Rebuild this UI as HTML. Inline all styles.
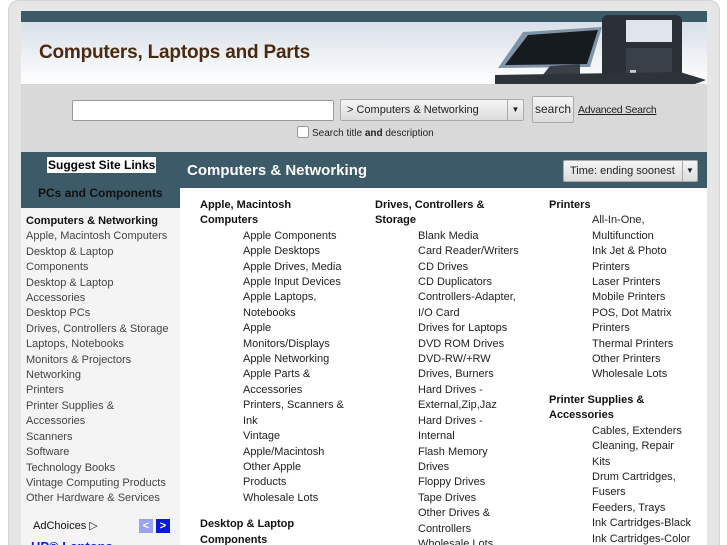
<!DOCTYPE html>
<html style="width:727px;height:545px;overflow:hidden"><head><meta charset="utf-8"><style>
*{margin:0;padding:0;box-sizing:border-box}
body{width:727px;height:545px;overflow:hidden;background:#fff;font-family:"Liberation Sans",sans-serif;position:relative}
.abs{position:absolute}
.frame{left:8px;top:0;width:712px;height:545px;background:#e6e6e6;border:1px solid #d4d4d4;border-bottom:none;border-radius:10px 10px 0 0}
.bar{left:21px;top:11px;width:686px;height:11px;background:#3c5a68}
.hdr{left:21px;top:22px;width:686px;height:62px;background:linear-gradient(180deg,#d8dfe8 0%,#eef1f5 55%,#fff 100%)}
.title{left:39px;top:42px;font-size:19px;font-weight:bold;color:#4a2a10;letter-spacing:-0.2px}
.search{left:21px;top:84px;width:686px;height:68px;background:#d9d9d9}
.side{left:21px;top:152px;width:159px;height:393px;background:#f4f4f4}
.sideh{left:21px;top:152px;width:159px;height:56px;background:#3c5a68}
.main{left:180px;top:152px;width:527px;height:393px;background:#fff}
.mainh{left:180px;top:152px;width:527px;height:36px;background:#3c5a68}
.sl{font-size:11px;line-height:15.4px;color:#444}
.col{font-size:11px;line-height:15.4px;color:#222}
.col b{display:block;color:#111}
.col .i{padding-left:43px}
</style></head><body>
<div class="abs frame"></div>
<div class="abs bar"></div>
<div class="abs hdr"></div>
<div class="abs title">Computers, Laptops and Parts</div>
<svg class="abs" style="left:480px;top:12px" width="235" height="72">
<rect x="122" y="3" width="80" height="69" rx="6" fill="#2a3036"/>
<rect x="146" y="8" width="46" height="22" fill="#dfe5ea"/>
<rect x="146" y="36" width="46" height="32" fill="#394049"/>
<rect x="150" y="58" width="6" height="4" fill="#ccc"/>
<polygon points="43,20 122,15 110,55 18,56" fill="#8193a6"/>
<polygon points="48,23 118,18 107,52 25,53" fill="#161b20"/>
<polygon points="70,54 100,52 100,64 62,64" fill="#3a4046"/>
<polygon points="15,63 200,60 226,68 215,72 15,72" fill="#2d3338"/>
</svg>
<div class="abs search"></div>
<div class="abs" style="left:72px;top:100px;width:262px;height:21px;background:#fff;border:1px solid #999;border-radius:2px"></div>
<div class="abs" style="left:340px;top:99px;width:184px;height:22px;background:linear-gradient(#f5f5f5,#dcdcdc);border:1px solid #aaa;border-radius:2px;font-size:11px;line-height:20px;padding-left:6px;color:#222">&gt; Computers &amp; Networking<span style="position:absolute;right:0;top:0;width:16px;height:20px;border-left:1px solid #aaa;text-align:center;font-size:8px">▼</span></div>
<div class="abs" style="left:532px;top:96px;width:42px;height:27px;background:linear-gradient(#f5f5f5,#dcdcdc);border:1px solid #aaa;border-radius:2px;font-size:12px;line-height:25px;text-align:center;color:#222">search</div>
<div class="abs" style="left:578px;top:104px;font-size:10.5px;color:#222;text-decoration:underline;letter-spacing:-0.3px">Advanced Search</div>
<div class="abs" style="left:297px;top:126px;width:12px;height:12px;background:#fff;border:1px solid #999;border-radius:2px"></div>
<div class="abs" style="left:312px;top:128px;font-size:10px;color:#222">Search title <b>and</b> description</div>
<div class="abs side"></div>
<div class="abs sideh"></div>
<div class="abs" style="left:47px;top:157px;background:#fff;font-size:12px;font-weight:bold;padding:0 1px;color:#000;line-height:16px">Suggest Site Links</div>
<div class="abs" style="left:38px;top:186px;font-size:12px;font-weight:bold;color:#111">PCs and Components</div>
<div class="abs sl" style="left:26px;top:214px"><b style="color:#111">Computers &amp; Networking</b><br>Apple, Macintosh Computers<br>Desktop &amp; Laptop<br>Components<br>Desktop &amp; Laptop<br>Accessories<br>Desktop PCs<br>Drives, Controllers &amp; Storage<br>Laptops, Notebooks<br>Monitors &amp; Projectors<br>Networking<br>Printers<br>Printer Supplies &amp;<br>Accessories<br>Scanners<br>Software<br>Technology Books<br>Vintage Computing Products<br>Other Hardware &amp; Services</div>
<div class="abs" style="left:33px;top:519px;font-size:11px;color:#111">AdChoices ▷</div>
<div class="abs" style="left:139px;top:519px;width:14px;height:14px;background:#99a4f0;color:#fff;font-size:11px;text-align:center;line-height:14px;font-weight:bold">&lt;</div>
<div class="abs" style="left:156px;top:519px;width:14px;height:14px;background:#0a1ad0;color:#fff;font-size:11px;text-align:center;line-height:14px;font-weight:bold">&gt;</div>
<div class="abs" style="left:31px;top:539px;font-size:13px;font-weight:bold;color:#12c;text-decoration:underline">HP® Laptops</div>
<div class="abs main"></div>
<div class="abs mainh"></div>
<div class="abs" style="left:187px;top:162px;font-size:15px;font-weight:bold;color:#fff">Computers &amp; Networking</div>
<div class="abs" style="left:563px;top:160px;width:135px;height:22px;background:linear-gradient(#f5f5f5,#dcdcdc);border:1px solid #aaa;border-radius:2px;font-size:11px;line-height:20px;padding-left:6px;color:#222">Time: ending soonest<span style="position:absolute;right:0;top:0;width:15px;height:20px;border-left:1px solid #aaa;text-align:center;font-size:8px">▼</span></div>
<div class="abs col" style="left:200px;top:198px;width:170px"><b>Apple, Macintosh<br>Computers</b><div class="i">Apple Components<br>Apple Desktops<br>Apple Drives, Media<br>Apple Input Devices<br>Apple Laptops,<br>Notebooks<br>Apple<br>Monitors/Displays<br>Apple Networking<br>Apple Parts &amp;<br>Accessories<br>Printers, Scanners &amp;<br>Ink<br>Vintage<br>Apple/Macintosh<br>Other Apple<br>Products<br>Wholesale Lots</div><b style="margin-top:11px">Desktop &amp; Laptop<br>Components</b></div>
<div class="abs col" style="left:375px;top:198px;width:170px"><b>Drives, Controllers &amp;<br>Storage</b><div class="i">Blank Media<br>Card Reader/Writers<br>CD Drives<br>CD Duplicators<br>Controllers-Adapter,<br>I/O Card<br>Drives for Laptops<br>DVD ROM Drives<br>DVD-RW/+RW<br>Drives, Burners<br>Hard Drives -<br>External,Zip,Jaz<br>Hard Drives -<br>Internal<br>Flash Memory<br>Drives<br>Floppy Drives<br>Tape Drives<br>Other Drives &amp;<br>Controllers<br>Wholesale Lots</div></div>
<div class="abs col" style="left:549px;top:198px;width:160px"><b>Printers</b><div class="i">All-In-One,<br>Multifunction<br>Ink Jet &amp; Photo<br>Printers<br>Laser Printers<br>Mobile Printers<br>POS, Dot Matrix<br>Printers<br>Thermal Printers<br>Other Printers<br>Wholesale Lots</div><b style="margin-top:10px">Printer Supplies &amp;<br>Accessories</b><div class="i">Cables, Extenders<br>Cleaning, Repair<br>Kits<br>Drum Cartridges,<br>Fusers<br>Feeders, Trays<br>Ink Cartridges-Black<br>Ink Cartridges-Color</div></div>
</body></html>
